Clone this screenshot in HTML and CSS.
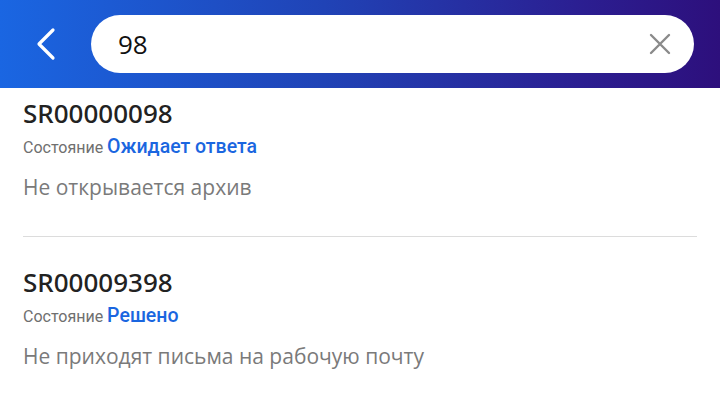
FILE: index.html
```html
<!DOCTYPE html>
<html lang="ru">
<head>
<meta charset="utf-8">
<link rel="stylesheet" href="styles.css">
</head>
<body>
<header class="topbar">
  <button class="back" aria-label="Назад">
    <svg width="24" height="36" viewBox="0 0 24 36"><path d="M19 4 L5 18 L19 32" fill="none" stroke="#fff" stroke-width="3.2" stroke-linecap="round" stroke-linejoin="round"/></svg>
  </button>
  <div class="search">
    <span class="query">98</span>
    <svg class="clear" width="22" height="22" viewBox="0 0 22 22"><path d="M2 2 L20 20 M20 2 L2 20" stroke="#8a8a8a" stroke-width="2.4" stroke-linecap="round"/></svg>
  </div>
</header>
<main class="list">
  <section class="item">
    <div class="num">SR00000098</div>
    <div class="state"><span class="label">Состояние</span> <span class="value">Ожидает ответа</span></div>
    <div class="desc">Не открывается архив</div>
  </section>
  <section class="item">
    <div class="num">SR00009398</div>
    <div class="state"><span class="label">Состояние</span> <span class="value">Решено</span></div>
    <div class="desc">Не приходят письма на рабочую почту</div>
  </section>
</main>
</body>
</html>
```
FILE: styles.css
```css
* { box-sizing: border-box; }
html, body { margin: 0; padding: 0; background: #fff; }
body { width: 720px; height: 402px; overflow: hidden; font-family: Roboto, "Noto Sans", sans-serif; }
.topbar {
  height: 88px;
  display: flex;
  align-items: center;
  padding: 0 26px 0 30px;
  background: linear-gradient(90deg, #1a66e2 0%, #2043b6 45%, #2b1f92 80%, #2d0f7c 100%);
}
.back {
  width: 32px; height: 40px;
  padding: 0; margin: 0 29px 0 0;
  background: none; border: 0;
  display: flex; align-items: center; justify-content: center;
}
.search {
  flex: 1;
  height: 58px;
  margin-top: -1px;
  background: #fff;
  border-radius: 29px;
  display: flex; align-items: center;
  padding: 0 23px 0 27px;
}
.query { flex: 1; font-family: "Open Sans", sans-serif; font-size: 26px; color: #111; }
.clear { display: block; }
.list { padding: 0 23px; }
.item { padding: 8px 0 35px; border-bottom: 1px solid #dcdcdc; }
.item:last-child { border-bottom: 0; padding-top: 28px; }
.num { font-family: "Noto Sans", "Open Sans", sans-serif; font-size: 26px; font-weight: 500; line-height: 34px; color: #222; }
.state { line-height: 28px; margin-top: 3px; white-space: nowrap; }
.label { font-size: 16px; color: #6f6f6f; }
.value { font-size: 19.5px; font-weight: 500; color: #1a66e0; }
.desc { font-family: "Open Sans", sans-serif; font-size: 21px; color: #7a7a7a; margin-top: 11px; line-height: 28px; }
```
